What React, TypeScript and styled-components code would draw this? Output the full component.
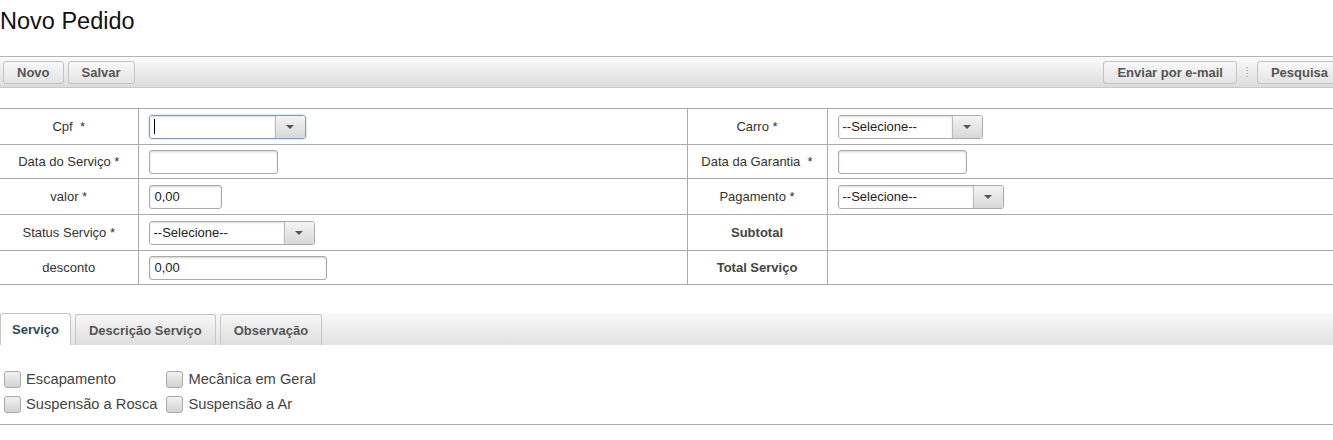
import React from "react";
import styled, { createGlobalStyle } from "styled-components";

const GlobalStyle = createGlobalStyle`
  html, body {
    margin: 0;
    padding: 0;
    background: #fff;
    font-family: "Liberation Sans", Arial, sans-serif;
    color: #333;
  }
`;

const Page = styled.div`
  width: 1333px;
  overflow: hidden;
`;

const Title = styled.h1`
  margin: 0;
  padding-top: 8px;
  font-size: 23.5px;
  line-height: 27px;
  font-weight: normal;
  color: #111;
`;

const Toolbar = styled.div`
  margin-top: 21px;
  height: 30px;
  display: flex;
  align-items: center;
  justify-content: space-between;
  padding: 0 3px;
  border-top: 1px solid #b4b4b4;
  border-bottom: 1px solid #c8c8c8;
  background: linear-gradient(#fbfbfb, #dcdcdc);
`;

const Group = styled.div<{ $bleed?: boolean }>`
  display: flex;
  align-items: center;
  gap: 4px;
  margin-right: ${(p) => (p.$bleed ? "-12px" : "0")};
`;

const ToolButton = styled.button`
  height: 23px;
  padding: 0 13px;
  border: 1px solid #c4c4c4;
  border-radius: 3px;
  background: linear-gradient(#f8f8f8, #e4e4e4);
  font-family: inherit;
  font-size: 13px;
  font-weight: bold;
  color: #555;
  cursor: pointer;
`;

const Grip = styled.span`
  width: 2px;
  height: 12px;
  margin: 0 5px;
  background-image: radial-gradient(circle, #bbb 0.8px, transparent 1px);
  background-size: 2px 3px;
`;

const Form = styled.table`
  margin-top: 20px;
  width: 100%;
  border-collapse: collapse;
  border-top: 1px solid #aaa;
  border-bottom: 1px solid #aaa;
  table-layout: fixed;
`;

const Row = styled.tr<{ $h: number }>`
  height: ${(p) => p.$h}px;
  border-bottom: 1px solid #aaa;
  &:last-child {
    border-bottom: none;
  }
`;

const Label = styled.td<{ $bold?: boolean }>`
  text-align: center;
  font-size: 13px;
  font-weight: ${(p) => (p.$bold ? "bold" : "normal")};
  color: ${(p) => (p.$bold ? "#444" : "#333")};
  border-right: 1px solid #aaa;
  padding: 0 4px;
`;

const Field = styled.td`
  padding: 0 10px;
  border-right: 1px solid #aaa;
  &:last-child {
    border-right: none;
  }
`;

const TextInput = styled.input<{ $w: number }>`
  box-sizing: border-box;
  display: block;
  width: ${(p) => p.$w}px;
  height: 24px;
  padding: 0 5px;
  border: 1px solid #aaa;
  border-radius: 3px;
  box-shadow: inset 0 1px 2px rgba(0, 0, 0, 0.18);
  font-family: inherit;
  font-size: 13px;
  color: #222;
  outline: none;
`;

const Combo = styled.div<{ $w: number; $focus?: boolean }>`
  box-sizing: border-box;
  display: flex;
  width: ${(p) => p.$w}px;
  height: 24px;
  border: 1px solid ${(p) => (p.$focus ? "#7f9db9" : "#aaa")};
  border-radius: 3px;
  box-shadow: ${(p) => (p.$focus ? "0 0 2px rgba(80,130,180,0.6)" : "none")};
  overflow: hidden;
`;

const ComboText = styled.div`
  flex: 1;
  display: flex;
  align-items: center;
  padding: 0 4px;
  font-size: 13px;
  color: #222;
  background: #fff;
  box-shadow: inset 0 1px 2px rgba(0, 0, 0, 0.15);
`;

const Caret = styled.span`
  width: 1px;
  height: 15px;
  background: #000;
`;

const ComboButton = styled.div`
  width: 29px;
  display: flex;
  align-items: center;
  justify-content: center;
  border-left: 1px solid #bbb;
  background: linear-gradient(#f4f4f4, #d8d8d8);
  &::after {
    content: "";
    border-left: 4px solid transparent;
    border-right: 4px solid transparent;
    border-top: 4px solid #555;
  }
`;

const Tabs = styled.div`
  margin-top: 28px;
  height: 32px;
  display: flex;
  align-items: flex-end;
  gap: 4px;
  background: linear-gradient(#f9f9f9, #e2e2e2);
`;

const Tab = styled.div<{ $active?: boolean }>`
  box-sizing: border-box;
  height: ${(p) => (p.$active ? "32px" : "31px")};
  padding: ${(p) => (p.$active ? "0 11px" : "0 13px")};
  display: flex;
  align-items: center;
  font-size: 13px;
  font-weight: bold;
  color: ${(p) => (p.$active ? "#2f4a5c" : "#555")};
  border: 1px solid #c6c6c6;
  border-bottom: none;
  border-radius: 3px 3px 0 0;
  background: ${(p) =>
    p.$active ? "#fff" : "linear-gradient(#f7f7f7, #dedede)"};
`;

const Checks = styled.div`
  display: grid;
  grid-template-columns: max-content max-content;
  column-gap: 9px;
  row-gap: 7px;
  padding: 25px 4px 11px;
  border-bottom: 1px solid #aaa;
`;

const CheckItem = styled.label`
  display: flex;
  align-items: center;
  gap: 5px;
  font-size: 14.7px;
  color: #444;
  height: 18px;
`;

const Box = styled.span`
  box-sizing: border-box;
  width: 17px;
  height: 17px;
  border: 1px solid #a9a9a9;
  border-radius: 3px;
  background: linear-gradient(#f2f2f2, #d2d2d2);
`;

const Select = ({ w, value, focus }: { w: number; value?: string; focus?: boolean }) => (
  <Combo $w={w} $focus={focus}>
    <ComboText>{value ?? <Caret />}</ComboText>
    <ComboButton />
  </Combo>
);

const services = ["Escapamento", "Mecânica em Geral", "Suspensão a Rosca", "Suspensão a Ar"];

export default function App() {
  return (
    <Page>
      <GlobalStyle />
      <Title>Novo Pedido</Title>

      <Toolbar>
        <Group>
          <ToolButton>Novo</ToolButton>
          <ToolButton>Salvar</ToolButton>
        </Group>
        <Group $bleed>
          <ToolButton>Enviar por e-mail</ToolButton>
          <Grip />
          <ToolButton>Pesquisa</ToolButton>
        </Group>
      </Toolbar>

      <Form>
        <colgroup>
          <col style={{ width: 138 }} />
          <col style={{ width: 549 }} />
          <col style={{ width: 140 }} />
          <col />
        </colgroup>
        <tbody>
          <Row $h={36}>
            <Label>Cpf&nbsp; *</Label>
            <Field>
              <Select w={157} focus />
            </Field>
            <Label>Carro *</Label>
            <Field>
              <Select w={145} value="--Selecione--" />
            </Field>
          </Row>
          <Row $h={34}>
            <Label>Data do Serviço *</Label>
            <Field>
              <TextInput $w={129} />
            </Field>
            <Label>Data da Garantia&nbsp; *</Label>
            <Field>
              <TextInput $w={129} />
            </Field>
          </Row>
          <Row $h={36}>
            <Label>valor *</Label>
            <Field>
              <TextInput $w={73} defaultValue="0,00" />
            </Field>
            <Label>Pagamento *</Label>
            <Field>
              <Select w={166} value="--Selecione--" />
            </Field>
          </Row>
          <Row $h={36}>
            <Label>Status Serviço *</Label>
            <Field>
              <Select w={166} value="--Selecione--" />
            </Field>
            <Label $bold>Subtotal</Label>
            <Field />
          </Row>
          <Row $h={34}>
            <Label>desconto</Label>
            <Field>
              <TextInput $w={178} defaultValue="0,00" />
            </Field>
            <Label $bold>Total Serviço</Label>
            <Field />
          </Row>
        </tbody>
      </Form>

      <Tabs>
        <Tab $active>Serviço</Tab>
        <Tab>Descrição Serviço</Tab>
        <Tab>Observação</Tab>
      </Tabs>

      <Checks>
        {services.map((s) => (
          <CheckItem key={s}>
            <Box />
            {s}
          </CheckItem>
        ))}
      </Checks>
    </Page>
  );
}
